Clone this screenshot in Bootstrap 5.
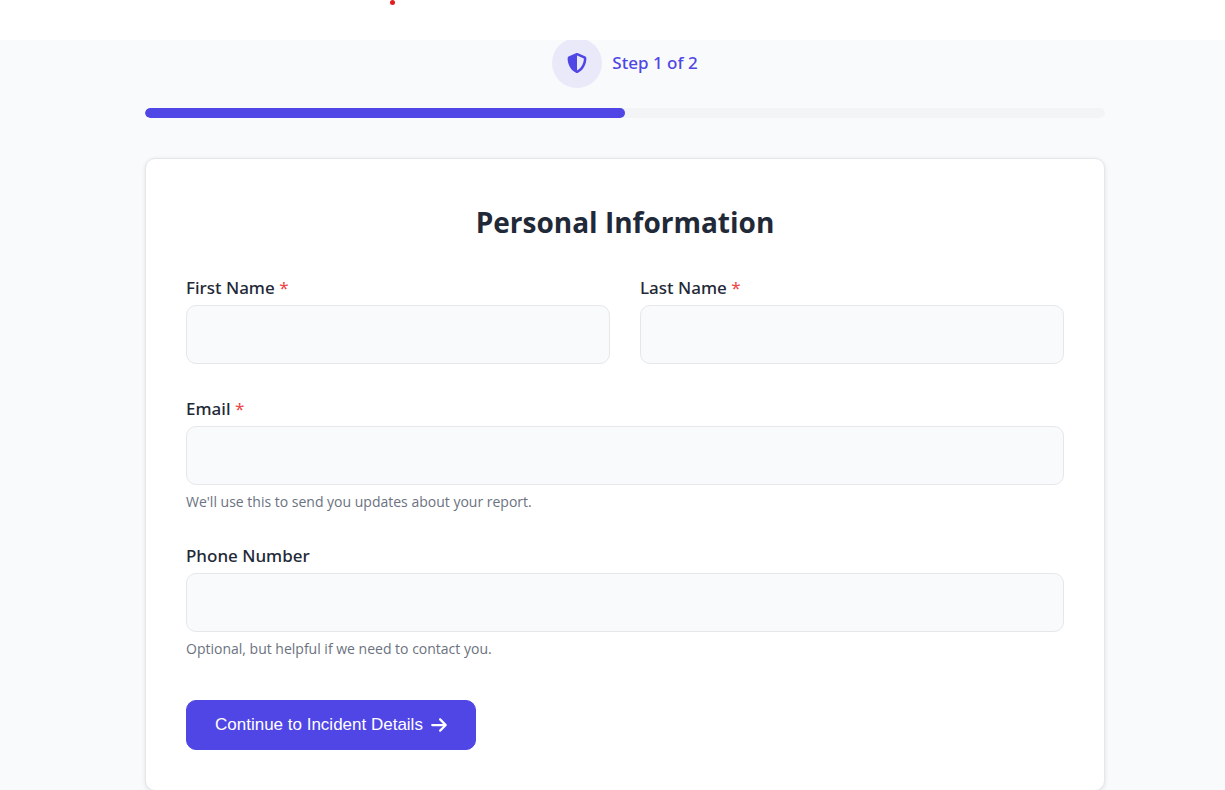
<!DOCTYPE html>
<html lang="en">
<head>
<meta charset="utf-8">
<meta name="viewport" content="width=device-width, initial-scale=1">
<title>Personal Information</title>
<link href="https://cdn.jsdelivr.net/npm/bootstrap@5.3.0/dist/css/bootstrap.min.css" rel="stylesheet">
<style>
  :root { --brand: #4f46e5; --ink: #1f2937; --line: #e5e7eb; --soft: #f9fafc; }
  body { font-family: "Segoe UI", "Open Sans", sans-serif; color: var(--ink); background: var(--soft); }
  .top-strip { height: 40px; }
  .top-dot { width: 5px; height: 5px; margin-left: 390px; background: #e11d1d; }
  .report-area { padding-left: 25px; overflow: hidden; }
  .report-wrap { max-width: 960px; }
  .step-row { margin-top: -2px; gap: 10px; margin-bottom: 20px; }
  .step-icon { width: 50px; height: 50px; background: #e9e9fa; color: var(--brand); }
  .step-text { font-family: "Segoe UI", "Noto Sans", sans-serif; font-size: 17px; line-height: 26px; font-weight: 500; color: var(--brand); }
  .step-progress { height: 10px; border-radius: 5px; background: #f3f4f6; margin-bottom: 40px; }
  .step-progress .progress-bar { background: var(--brand); border-radius: 5px; }
  .form-card { border: 1px solid var(--line); border-radius: 10px; padding: 40px; box-shadow: 0 1px 4px rgba(0, 0, 0, .1); }
  .form-title { font-size: 28px; line-height: 46px; font-weight: 700; margin-bottom: 32px; }
  .form-label { font-family: "Segoe UI", "Noto Sans", sans-serif; font-size: 17px; line-height: 22px; font-weight: 500; margin-bottom: 6px; }
  .required-mark { color: #ef4444; font-weight: 400; }
  .form-control { height: 59px; border-color: var(--line); border-radius: 10px; background: var(--soft); font-size: 17px; padding: 15px; }
  .form-text { font-size: 14px; line-height: 20px; color: #6b7280; margin-top: 7px; }
  .names { --bs-gutter-x: 30px; margin-bottom: 34px; }
  .field-gap { margin-bottom: 33px; }
  .button-row { padding-top: 8px; }
  .next-btn { font-family: Arial, "Liberation Sans", sans-serif; font-size: 17px; line-height: 24px; padding: 12px 28px; border-radius: 10px; gap: 8px;
    --bs-btn-color: #fff; --bs-btn-bg: #4f46e5; --bs-btn-border-color: #4f46e5; --bs-btn-hover-color: #fff; --bs-btn-hover-bg: #4338ca; }
</style>
</head>
<body>
<header class="top-strip bg-white"><div class="top-dot rounded-circle"></div></header>
<main class="report-area">
  <div class="report-wrap mx-auto">
    <div class="step-row d-flex justify-content-center align-items-center">
      <span class="step-icon rounded-circle d-flex justify-content-center align-items-center">
        <svg width="20" height="20" viewBox="0 0 512 512" fill="currentColor" aria-hidden="true"><path d="M256 0c4.6 0 9.2 1 13.4 2.9L457.7 82.8c22 9.3 38.4 31 38.3 57.2c-.5 99.2-41.3 280.7-213.6 363.2c-16.7 8-36.1 8-52.8 0C57.3 420.7 16.5 239.2 16 140c-.1-26.2 16.3-47.9 38.3-57.2L242.7 2.9C246.8 1 251.4 0 256 0zm0 66.8V444.8C394 378 431.1 230.1 432 141.4L256 66.8z"/></svg>
      </span>
      <span class="step-text">Step 1 of 2</span>
    </div>
    <div class="progress step-progress" role="progressbar" aria-label="Form progress" aria-valuenow="50" aria-valuemin="0" aria-valuemax="100">
      <div class="progress-bar" style="width: 50%"></div>
    </div>
    <form class="form-card bg-white">
      <h2 class="form-title text-center">Personal Information</h2>
      <div class="row names">
        <div class="col-6">
          <label class="form-label d-block" for="firstName">First Name <span class="required-mark">*</span></label>
          <input class="form-control" type="text" id="firstName" required>
        </div>
        <div class="col-6">
          <label class="form-label d-block" for="lastName">Last Name <span class="required-mark">*</span></label>
          <input class="form-control" type="text" id="lastName" required>
        </div>
      </div>
      <div class="field-gap">
        <label class="form-label d-block" for="email">Email <span class="required-mark">*</span></label>
        <input class="form-control" type="email" id="email" required>
        <div class="form-text">We'll use this to send you updates about your report.</div>
      </div>
      <div class="field-gap">
        <label class="form-label d-block" for="phone">Phone Number</label>
        <input class="form-control" type="tel" id="phone">
        <div class="form-text">Optional, but helpful if we need to contact you.</div>
      </div>
      <div class="button-row d-flex">
        <button class="btn next-btn d-inline-flex align-items-center" type="submit">Continue to Incident Details
          <svg width="16" height="18" viewBox="0 0 448 512" fill="currentColor" aria-hidden="true"><path d="M438.6 278.6c12.5-12.5 12.5-32.8 0-45.3l-160-160c-12.5-12.5-32.8-12.5-45.3 0s-12.5 32.8 0 45.3L338.8 224 32 224c-17.7 0-32 14.3-32 32s14.3 32 32 32l306.7 0L233.4 393.4c-12.5 12.5-12.5 32.8 0 45.3s32.8 12.5 45.3 0l160-160z"/></svg>
        </button>
      </div>
    </form>
  </div>
</main>
<script src="https://cdn.jsdelivr.net/npm/bootstrap@5.3.0/dist/js/bootstrap.bundle.min.js"></script>
</body>
</html>
